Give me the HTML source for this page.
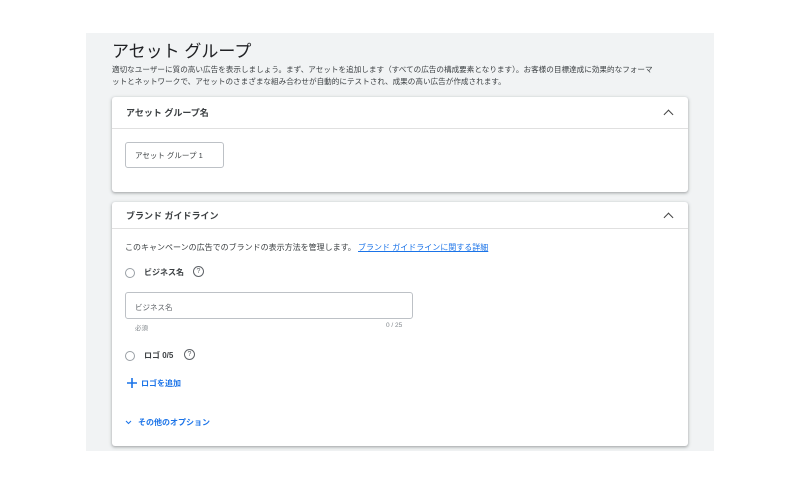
<!DOCTYPE html>
<html><head><meta charset="utf-8"><style>
*{margin:0;padding:0;box-sizing:border-box}
body{width:800px;height:485px;background:#fff;font-family:"Liberation Sans","Noto Sans CJK JP",sans-serif;position:relative;overflow:hidden;color:#202124}
.bg{position:absolute;left:86px;top:33px;width:628px;height:418px;background:#f1f3f4}
.a{position:absolute;white-space:nowrap}
.card{position:absolute;left:112px;width:576px;background:#fff;border-radius:3px;box-shadow:0 1px 2px rgba(60,64,67,.3),0 1px 3px 1px rgba(60,64,67,.15)}
.chev{position:absolute;right:16px;width:7px;height:7px;border-left:1.5px solid #444;border-top:1.5px solid #444;transform:rotate(45deg)}
.radio{position:absolute;width:10px;height:10px;border:1px solid #9aa0a6;border-radius:50%}
.q{position:absolute;width:11px;height:11px;border:1px solid #5f6368;border-radius:50%;font-size:7px;text-align:center;line-height:9px;color:#5f6368}
</style></head><body>
<div class="bg"></div>
<div class="a" style="left:112px;top:37px;font-size:17px;color:#202124">アセット グループ</div>
<div class="a" style="left:112px;top:64px;font-size:7.6px;line-height:12px;color:#3c4043">適切なユーザーに質の高い広告を表示しましょう。まず、アセットを追加します（すべての広告の構成要素となります）。お客様の目標達成に効果的なフォーマ<br>ットとネットワークで、アセットのさまざまな組み合わせが自動的にテストされ、成果の高い広告が作成されます。</div>
<div class="card" style="top:97px;height:95px">
 <div class="a" style="left:14px;top:9px;font-size:9px;font-weight:bold;color:#3c4043">アセット グループ名</div>
 <div class="chev" style="top:14px"></div>
 <div style="position:absolute;left:0;right:0;top:31px;border-top:1px solid #e0e0e0"></div>
 <div style="position:absolute;left:13px;top:45px;width:99px;height:26px;border:1px solid #bdc1c6;border-radius:3px"></div>
 <div class="a" style="left:23px;top:53px;font-size:7.5px;color:#3c4043">アセット グループ 1</div>
</div>
<div class="card" style="top:202px;height:244px">
 <div class="a" style="left:14px;top:7px;font-size:9px;font-weight:bold;color:#3c4043">ブランド ガイドライン</div>
 <div class="chev" style="top:12px"></div>
 <div style="position:absolute;left:0;right:0;top:26px;border-top:1px solid #e0e0e0"></div>
 <div class="a" style="left:13px;top:40px;font-size:8px;color:#3c4043">このキャンペーンの広告でのブランドの表示方法を管理します。 <span style="color:#1a73e8;text-decoration:underline">ブランド ガイドラインに関する詳細</span></div>
 <div class="radio" style="left:13px;top:66px"></div>
 <div class="a" style="left:32px;top:65px;font-size:8px;font-weight:bold;color:#3c4043">ビジネス名</div>
 <div class="q" style="left:81px;top:64px">?</div>
 <div style="position:absolute;left:13px;top:90px;width:288px;height:27px;border:1px solid #bdc1c6;border-radius:3px"></div>
 <div class="a" style="left:23px;top:100px;font-size:7.5px;color:#5f6368">ビジネス名</div>
 <div class="a" style="left:23px;top:120px;font-size:6.5px;color:#80868b">必須</div>
 <div class="a" style="left:274px;top:120px;font-size:6.5px;color:#80868b">0 / 25</div>
 <div class="radio" style="left:13px;top:149px"></div>
 <div class="a" style="left:32px;top:148px;font-size:8px;font-weight:bold;color:#3c4043">ロゴ 0/5</div>
 <div class="q" style="left:72px;top:147px">?</div>
 <svg style="position:absolute;left:15px;top:176px" width="10" height="10"><path d="M5 0V10M0 5H10" stroke="#1a73e8" stroke-width="1.6"/></svg>
 <div class="a" style="left:29px;top:176px;font-size:8px;color:#1a73e8;font-weight:bold">ロゴを追加</div>
 <svg style="position:absolute;left:13px;top:218px" width="7" height="5"><path d="M1 1L3.5 3.5L6 1" stroke="#1a73e8" stroke-width="1" fill="none"/></svg>
 <div class="a" style="left:26px;top:215px;font-size:8px;color:#1a73e8;font-weight:bold">その他のオプション</div>
</div>
</body></html>
